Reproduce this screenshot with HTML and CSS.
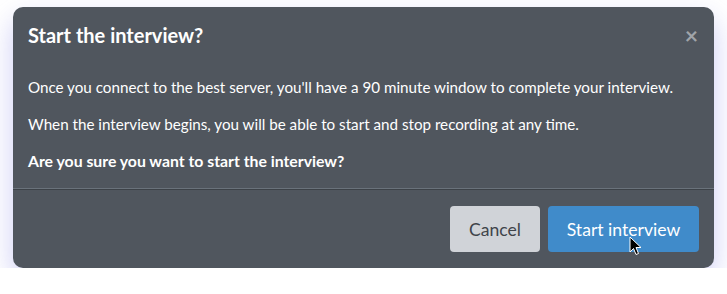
FILE: index.html
```html
<!DOCTYPE HTML>
<html lang="en">
  <head>
    <title>Start the interview?</title>
    <meta charset="utf-8">
    <link rel="stylesheet" href="styles.css">
  </head>
  <body>

  <div class="modal">
    <div class="modal-header">
      <h4 class="modal-title">Start the interview?</h4>
      <span class="close">&times;</span>
    </div>

    <div class="modal-body">
      <p>Once you connect to the best server, you'll have a 90 minute window to complete your interview.</p>
      <p>When the interview begins, you will be able to start and stop recording at any time.</p>
      <p class="strong">Are you sure you want to start the interview?</p>
    </div>

    <div class="modal-footer">
      <button class="btn btn-cancel">Cancel</button>
      <button class="btn btn-primary">Start interview
        <svg class="cursor" width="13" height="20" viewBox="0 0 13 20">
          <path d="M1 1 L1 16 L4.5 12.5 L7 18.5 L9.5 17.5 L7 11.5 L12 11.5 Z" fill="#000" stroke="#fff" stroke-width="1"/>
        </svg>
      </button>
    </div>
  </div>

  </body>
</html>
```

FILE: styles.css
```css
html {
  height: 100%;
}
body {
  margin: 0;
  padding: 0;
  background: #ffffff;
  font-family: Lato, "Liberation Sans", sans-serif;
  color: #ffffff;
}

.modal {
  width: 701px;
  margin: 7px 0 0 13px;
  background-color: #50565e;
  border-radius: 10px;
  box-shadow: 0 12px 28px rgba(100, 100, 225, 0.32);
}

.modal-header {
  display: flex;
  justify-content: space-between;
  align-items: center;
  padding: 9px 16px 0 15px;
  height: 38px;
}

.modal-title {
  margin: 0;
  font-size: 20px;
  font-weight: bold;
}

.close {
  color: #a0a4a9;
  font-size: 23px;
  font-weight: bold;
  line-height: 1;
}

.modal-body {
  padding: 22px 15px 1px 15px;
  border-bottom: 1px solid #6a727b;
}

.modal-body p {
  margin: 0 0 15px 0;
  font-size: 15.2px;
  line-height: 22px;
}

.modal-body p.strong {
  font-weight: bold;
  font-size: 15.8px;
}

.modal-footer {
  display: flex;
  justify-content: flex-end;
  gap: 8px;
  padding: 16px 15px 16px 15px;
  border-top: 1px solid #3d4248;
}

.btn {
  position: relative;
  height: 46px;
  border: none;
  border-radius: 4px;
  font-family: Lato, "Liberation Sans", sans-serif;
  font-size: 17.6px;
  padding: 0;
}

.btn-cancel {
  width: 90px;
  background-color: #d0d3d8;
  color: #3f444a;
}

.btn-primary {
  width: 151px;
  background-color: #408bca;
  color: #ffffff;
}

.cursor {
  position: absolute;
  left: 81px;
  top: 30px;
}
```
